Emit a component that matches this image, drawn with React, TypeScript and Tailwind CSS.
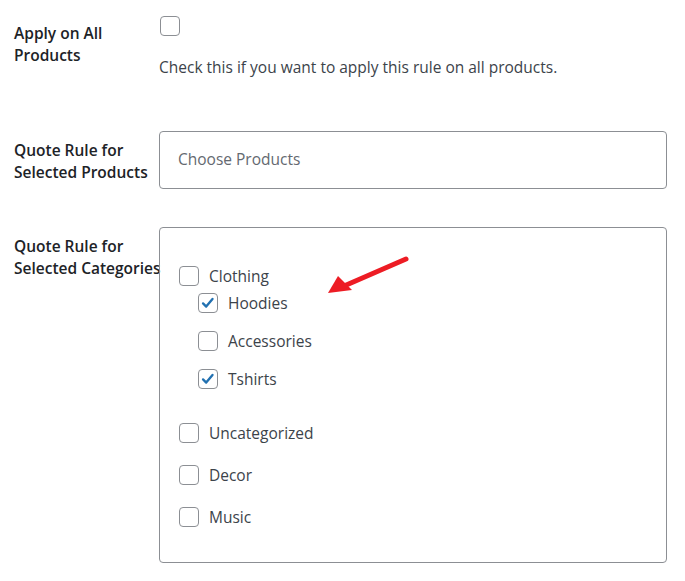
import React from 'react';

const font = { fontFamily: '"Open Sans", "Noto Sans", sans-serif' };

function Box({ checked = false }: { checked?: boolean }) {
  return (
    <span className="flex h-[20px] w-[20px] shrink-0 items-center justify-center rounded-[4px] border border-[#8c8f94] bg-white">
      {checked && (
        <svg viewBox="0 0 20 20" className="h-[18px] w-[18px]">
          <path d="M4.5 10.5 L8 14 L15 5.5" fill="none" stroke="#2271b1" strokeWidth="2.6" strokeLinecap="round" strokeLinejoin="round" />
        </svg>
      )}
    </span>
  );
}

function Item({ label, checked, className = '' }: { label: string; checked?: boolean; className?: string }) {
  return (
    <div className={`flex items-center gap-[10px] ${className}`}>
      <Box checked={checked} />
      <span className="text-[15.5px] leading-[20px] text-[#3c434a]">{label}</span>
    </div>
  );
}

export default function App() {
  return (
    <div className="h-[581px] w-[685px] bg-white text-[#1d2327]" style={font}>
      {/* Apply on all */}
      <div className="flex pt-[16px]">
        <div className="w-[159px] pl-[14px] pt-[6px] text-[15.5px] font-semibold leading-[22px]">
          Apply on All
          <br />
          Products
        </div>
        <div>
          <span className="ml-[1px] block">
            <Box />
          </span>
          <p className="mt-[21px] text-[15.5px] leading-[20px] text-[#3c434a]">
            Check this if you want to apply this rule on all products.
          </p>
        </div>
      </div>

      {/* Products */}
      <div className="mt-[54px] flex">
        <div className="w-[159px] pl-[14px] pt-[8px] text-[15.5px] font-semibold leading-[22px]">
          Quote Rule for
          <br />
          Selected Products
        </div>
        <div className="flex h-[58px] w-[508px] items-center rounded-[4px] border border-[#8c8f94] px-[18px] text-[15.5px] text-[#646970]">
          Choose Products
        </div>
      </div>

      {/* Categories */}
      <div className="mt-[38px] flex">
        <div className="w-[159px] whitespace-nowrap pl-[14px] pt-[8px] text-[15.5px] font-semibold leading-[22px]">
          Quote Rule for
          <br />
          Selected Categories
        </div>
        <div className="relative h-[336px] w-[508px] rounded-[4px] border border-[#8c8f94] pl-[19px] pt-[38px]">
          <Item label="Clothing" />
          <div className="ml-[19px] mt-[7px] flex flex-col gap-[18px]">
            <Item label="Hoodies" checked />
            <Item label="Accessories" />
            <Item label="Tshirts" checked />
          </div>
          <div className="mt-[34px] flex flex-col gap-[22px]">
            <Item label="Uncategorized" />
            <Item label="Decor" />
            <Item label="Music" />
          </div>

          {/* annotation arrow */}
          <svg className="absolute left-[160px] top-[22px]" width="92" height="50" viewBox="0 0 92 50">
            <path d="M86 9 L24 36" stroke="#ed1c24" strokeWidth="5" strokeLinecap="round" />
            <path d="M8 43 L18 26 L32 40 Z" fill="#ed1c24" />
          </svg>
        </div>
      </div>
    </div>
  );
}
